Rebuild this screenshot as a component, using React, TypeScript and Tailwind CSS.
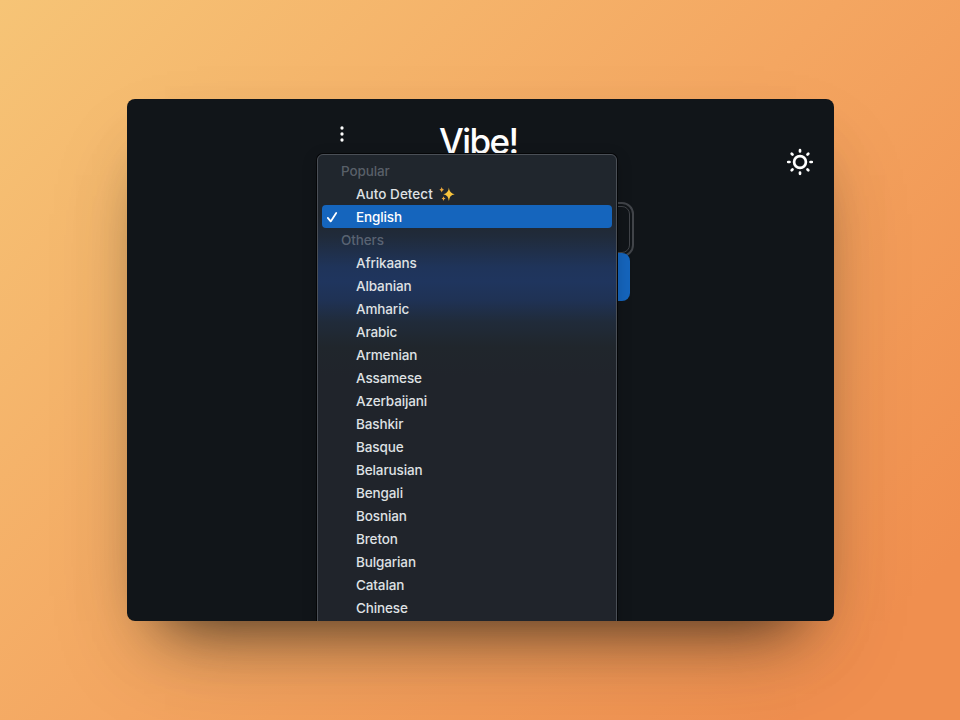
import React from "react";

const others = [
  "Afrikaans",
  "Albanian",
  "Amharic",
  "Arabic",
  "Armenian",
  "Assamese",
  "Azerbaijani",
  "Bashkir",
  "Basque",
  "Belarusian",
  "Bengali",
  "Bosnian",
  "Breton",
  "Bulgarian",
  "Catalan",
  "Chinese",
];

function SunIcon() {
  return (
    <svg className="h-7 w-7" viewBox="0 0 28 28" fill="none" stroke="white" strokeLinecap="round">
      <circle cx="14" cy="14" r="5.9" strokeWidth="2.7" />
      <path
        strokeWidth="2.7"
        d="M14 2.2v1.3M14 24.5v1.3M2.2 14h1.3M24.5 14h1.3M5.7 5.7l.8.8M21.5 21.5l.8.8M5.7 22.3l.8-.8M21.5 6.5l.8-.8"
      />
    </svg>
  );
}

function DotsIcon() {
  return (
    <svg className="h-5 w-5" viewBox="0 0 20 20" fill="white">
      <circle cx="10" cy="4" r="1.65" />
      <circle cx="10" cy="10" r="1.65" />
      <circle cx="10" cy="16" r="1.65" />
    </svg>
  );
}

function Sparkles() {
  return (
    <svg className="-mt-[2px] ml-[6px] h-4 w-4" viewBox="0 0 16 16">
      <path fill="#f7c33c" d="M9.9 1.5Q10.3 7.4 15.7 8.2Q10.3 9 9.9 15Q9.4 9 4.3 8.2Q9.4 7.4 9.9 1.5Z" />
      <path fill="#eba63a" d="M2.7 1Q3 3.3 5 3.8Q3 4.3 2.7 6.6Q2.4 4.3.4 3.8Q2.4 3.3 2.7 1Z" />
      <path fill="#eba63a" d="M4.5 10.3Q4.8 12.2 6.6 12.6Q4.8 13 4.5 15Q4.2 13 2.6 12.6Q4.2 12.2 4.5 10.3Z" />
    </svg>
  );
}

function GroupLabel({ children }: { children: React.ReactNode }) {
  return <div className="h-[23px] pl-[19px] pt-px leading-[23px] text-[#a2a9b5]/45">{children}</div>;
}

function Option({ children, selected = false }: { children: React.ReactNode; selected?: boolean }) {
  return (
    <div
      className={
        selected
          ? "flex h-[23px] items-center rounded-[4px] bg-[#1565bd] text-white"
          : "flex h-[23px] items-center text-[#dfe1e4]"
      }
    >
      <span className="flex w-[34px] shrink-0 pl-[5px]">
        {selected && (
          <svg className="h-3 w-3" viewBox="0 0 12 12" fill="none" stroke="white" strokeWidth="1.8" strokeLinecap="round" strokeLinejoin="round">
            <path d="M.8 6.9L3.7 10.4L9.2 1.9" />
          </svg>
        )}
      </span>
      <span className="flex items-center pt-[2px]">{children}</span>
    </div>
  );
}

function LanguageMenu() {
  return (
    <div className="absolute left-[190px] top-[55px] h-[480px] w-[300px] rounded-[6px] border border-[#4a4f56] bg-[#20242b] bg-[linear-gradient(180deg,#20262d_0px,#20262d_60px,#202b3b_82px,#1f345a_112px,#1f355e_127px,#1f3255_145px,#202b3a_167px,#20262c_192px,#20242b_220px)] p-1 text-[13.5px] font-medium tracking-[-0.12px] shadow-[0_0_0_1px_#050608,0_4px_16px_rgba(0,0,0,0.2)]">
      <GroupLabel>Popular</GroupLabel>
      <Option>
        <span className="tracking-[0.04px]">Auto Detect</span>
        <Sparkles />
      </Option>
      <Option selected>English</Option>
      <GroupLabel>Others</GroupLabel>
      {others.map((name) => (
        <Option key={name}>{name}</Option>
      ))}
    </div>
  );
}

export default function App() {
  return (
    <div className="h-[720px] w-[960px] overflow-hidden bg-[linear-gradient(135deg,#f6c476_0%,#f4a661_50%,#f08f4f_90%)] pl-[127px] pt-[99px] font-['Inter','Liberation_Sans',sans-serif]">
      <div className="h-[522px] w-[707px] rounded-[8px] shadow-[0_45px_90px_-25px_rgba(50,50,40,0.28),0_38px_60px_-38px_rgba(0,0,0,0.72)]">
        <div className="relative h-full w-full overflow-hidden rounded-[8px] bg-[#111519]">
          <div className="flex justify-end pr-5">
            <div className="mr-[156px] w-[300px] pt-[20px]">
              <div className="flex h-[44px] items-start">
                <div className="mt-[5px] w-[24px] pl-[2px]">
                  <DotsIcon />
                </div>
                <h1 className="ml-[85px] whitespace-nowrap text-[35px] font-medium leading-[44px] tracking-[-1.6px] text-white">
                  Vibe!
                </h1>
              </div>
              <div className="mt-[43px] h-[47px] w-[300px] rounded-[8px] border border-[#414449] outline-2 outline-offset-2 outline-[#414449]" />
              <div className="relative h-[48px] w-[300px] rounded-[8px] bg-[#1565bd]" />
            </div>
            <div className="pt-[49px]">
              <SunIcon />
            </div>
          </div>
          <LanguageMenu />
        </div>
      </div>
    </div>
  );
}
